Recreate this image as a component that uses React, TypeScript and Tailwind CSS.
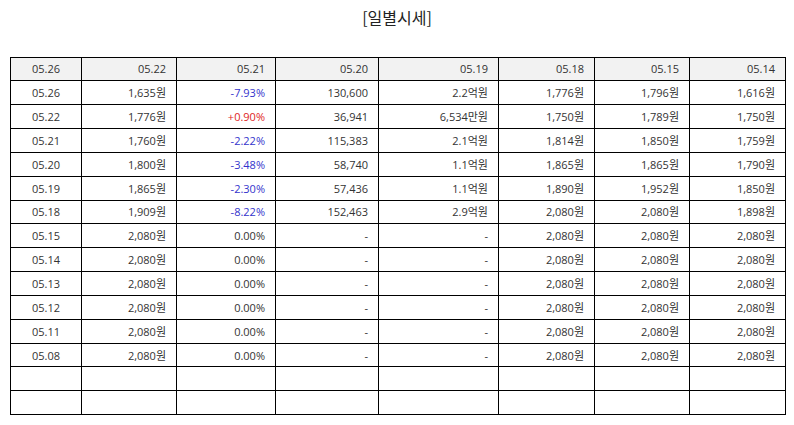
import React from "react";

type Row = string[];

const data: Row[] = [
  ["05.26", "1,635원", "-7.93%", "130,600", "2.2억원", "1,776원", "1,796원", "1,616원"],
  ["05.22", "1,776원", "+0.90%", "36,941", "6,534만원", "1,750원", "1,789원", "1,750원"],
  ["05.21", "1,760원", "-2.22%", "115,383", "2.1억원", "1,814원", "1,850원", "1,759원"],
  ["05.20", "1,800원", "-3.48%", "58,740", "1.1억원", "1,865원", "1,865원", "1,790원"],
  ["05.19", "1,865원", "-2.30%", "57,436", "1.1억원", "1,890원", "1,952원", "1,850원"],
  ["05.18", "1,909원", "-8.22%", "152,463", "2.9억원", "2,080원", "2,080원", "1,898원"],
  ["05.15", "2,080원", "0.00%", "-", "-", "2,080원", "2,080원", "2,080원"],
  ["05.14", "2,080원", "0.00%", "-", "-", "2,080원", "2,080원", "2,080원"],
  ["05.13", "2,080원", "0.00%", "-", "-", "2,080원", "2,080원", "2,080원"],
  ["05.12", "2,080원", "0.00%", "-", "-", "2,080원", "2,080원", "2,080원"],
  ["05.11", "2,080원", "0.00%", "-", "-", "2,080원", "2,080원", "2,080원"],
  ["05.08", "2,080원", "0.00%", "-", "-", "2,080원", "2,080원", "2,080원"],
  ["", "", "", "", "", "", "", ""],
  ["", "", "", "", "", "", "", ""],
];

const header = ["05.26", "05.22", "05.21", "05.20", "05.19", "05.18", "05.15", "05.14"];
const widths = [71, 95, 99, 103, 120, 96, 95, 96];

function pctColor(v: string): string {
  if (v.startsWith("-")) return "text-[#3333cc]";
  if (v.startsWith("+")) return "text-[#e02525]";
  return "text-[#333333]";
}

export default function App() {
  return (
    <div
      className="w-[794px] h-[425px] bg-white text-[#333333] overflow-hidden"
      style={{ fontFamily: '"Open Sans", "Noto Sans CJK KR", sans-serif' }}
    >
      <div
        className="h-[56.5px] pt-[5px] text-center text-[16px] leading-[24px] text-[#222222]"
        style={{ fontFamily: '"Noto Sans CJK KR", sans-serif' }}
      >
        [일별시세]
      </div>
      <table className="ml-[10px] w-[775px] border-collapse table-fixed text-[11px]">
        <colgroup>
          {widths.map((w, i) => (
            <col key={i} style={{ width: w }} />
          ))}
        </colgroup>
        <thead>
          <tr className="h-[23.85px] bg-[#f2f2f2]">
            {header.map((h, i) => (
              <th
                key={i}
                className={`border border-black font-normal p-0 leading-none ${
                  i === 0 ? "text-center" : "text-right pr-[10px]"
                }`}
              >
                {h}
              </th>
            ))}
          </tr>
        </thead>
        <tbody>
          {data.map((r, ri) => (
            <tr key={ri} className="h-[23.85px]">
              {r.map((c, ci) => (
                <td
                  key={ci}
                  className={`border border-black p-0 leading-none ${
                    ci === 0 ? "text-center" : "text-right pr-[10px]"
                  } ${ci === 2 ? pctColor(c) : ""}`}
                >
                  {c}
                </td>
              ))}
            </tr>
          ))}
        </tbody>
      </table>
    </div>
  );
}
